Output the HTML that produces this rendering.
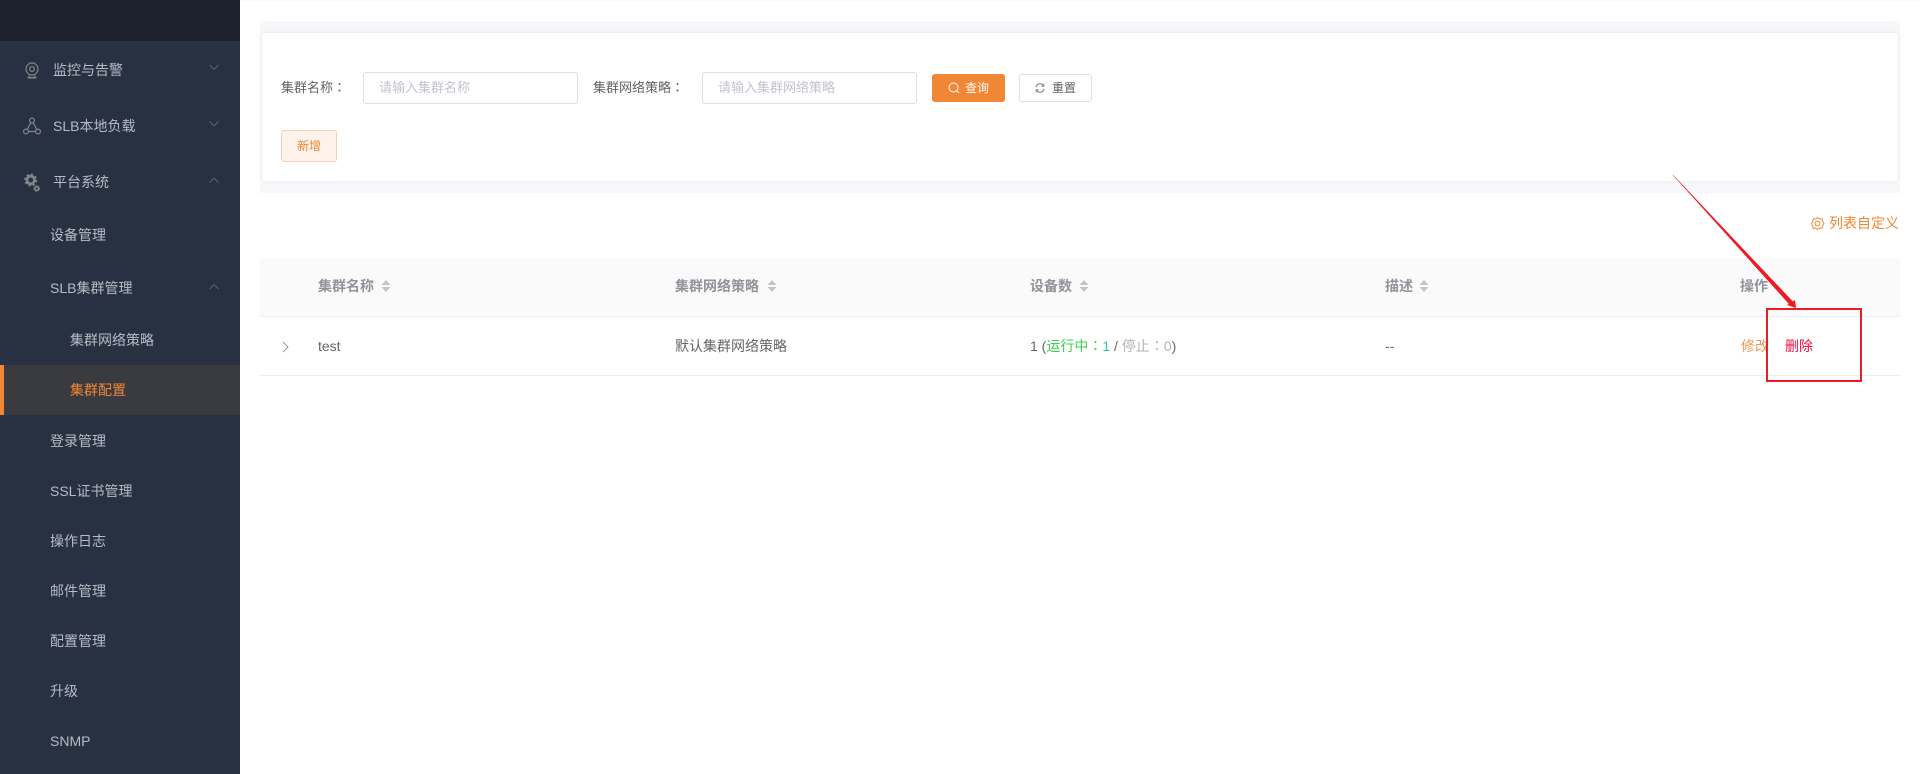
<!DOCTYPE html>
<html lang="zh-CN"><head><meta charset="utf-8"><title>集群配置</title>
<style>
*{box-sizing:border-box;margin:0;padding:0}
html,body{width:1920px;height:774px;overflow:hidden;background:#fff;font-family:"Liberation Sans","Noto Sans CJK SC",sans-serif}
.a{position:absolute;white-space:nowrap}
#side{left:0;top:0;width:240px;height:774px;background:#283142}
#top{left:0;top:0;width:240px;height:41px;background:#1c222e}
.m{color:#b6bcc4;font-size:14px;line-height:20px}
.t{font-size:14px;line-height:20px;color:#666}
.l{font-size:13px;line-height:20px;color:#606266}
.h{font-size:14px;line-height:20px;color:#909399;font-weight:700}
.box{background:#fff;border:1px solid #dcdfe6;border-radius:3px}
.ph{font-size:13px;line-height:20px;color:#c0c4cc}
.c{font-family:"Liberation Sans","Noto Sans CJK TC",sans-serif}
svg{position:absolute;overflow:visible}
</style></head><body>
<div class="a" style="left:240px;top:0;width:1680px;height:2px;background:linear-gradient(#f5f5f5,#fff)"></div>
<div class="a" id="side"></div><div class="a" id="top"></div>
<svg style="left:0;top:0" width="240" height="774" fill="none" stroke="#80858b" stroke-width="1.2">
<circle cx="32" cy="69" r="6"/><circle cx="32" cy="69" r="2.400"/><path d="M29 75.500v2h6v-2M27.500 78h9"/>
<circle cx="32" cy="120.500" r="2.400"/><circle cx="26" cy="131.500" r="2.400"/><circle cx="38" cy="131.500" r="2.400"/><path d="M30.800 122.600 27.200 129.400M33.200 122.600 36.800 129.400M28.400 131.500H35.600"/>
<circle cx="30.700" cy="180" r="3.800" stroke-width="2.800"/><circle cx="30.700" cy="180" r="5.600" stroke-width="1.800" stroke-dasharray="2.200 2.200"/>
<circle cx="36.700" cy="188.500" r="1.900" stroke-width="1.600"/><circle cx="36.700" cy="188.500" r="2.900" stroke-width="1" stroke-dasharray="1.200 1.200"/>
<g stroke="#5a6270" stroke-width="1"><path d="M209.500 65l4.500 4.300 4.500-4.300M209.500 121.500l4.500 4.300 4.500-4.300M209.500 182.500l4.500-4.300 4.500 4.300M209.500 289l4.500-4.300 4.500 4.300"/></g>
</svg>
<div class="a m" style="left:53px;top:60px">监控与告警</div>
<div class="a m" style="left:53px;top:116px">SLB本地负载</div>
<div class="a m" style="left:53px;top:172px">平台系统</div>
<div class="a m" style="left:50px;top:225px">设备管理</div>
<div class="a m" style="left:50px;top:278px">SLB集群管理</div>
<div class="a m" style="left:70px;top:330px">集群网络策略</div>
<div class="a" style="left:0;top:365px;width:240px;height:50px;background:#3a3b40;border-left:4px solid #f18634"></div>
<div class="a m" style="left:70px;top:380px;color:#f18634">集群配置</div>
<div class="a m" style="left:50px;top:431px">登录管理</div>
<div class="a m" style="left:50px;top:481px">SSL证书管理</div>
<div class="a m" style="left:50px;top:531px">操作日志</div>
<div class="a m" style="left:50px;top:581px">邮件管理</div>
<div class="a m" style="left:50px;top:631px">配置管理</div>
<div class="a m" style="left:50px;top:681px">升级</div>
<div class="a m" style="left:50px;top:731px">SNMP</div>

<div class="a" style="left:260px;top:21px;width:1640px;height:172px;background:#f7f8fa"></div>
<div class="a" style="left:261px;top:32px;width:1638px;height:150px;background:#fff;border:1px solid #eef0f6;border-radius:3px;box-shadow:0 0 5px rgba(230,232,238,.25)"></div>
<div class="a l" style="left:281px;top:78px">集群名称<span class="c" lang="zh-TW">：</span></div>
<div class="a box" style="left:363px;top:72px;width:215px;height:32px"></div>
<div class="a ph" style="left:379px;top:78px">请输入集群名称</div>
<div class="a l" style="left:593px;top:78px">集群网络策略<span class="c" lang="zh-TW">：</span></div>
<div class="a box" style="left:702px;top:72px;width:215px;height:32px"></div>
<div class="a ph" style="left:718px;top:78px">请输入集群网络策略</div>
<div class="a" style="left:932px;top:74px;width:73px;height:28px;background:#f18634;border-radius:3px"></div>
<svg style="left:948px;top:82px" width="12" height="12" fill="none" stroke="#fff" stroke-width="1"><circle cx="5.500" cy="5.500" r="4.500"/><path d="M9 9l2 2"/></svg>
<div class="a" style="left:965px;top:78px;font-size:12px;line-height:20px;color:#fff">查询</div>
<div class="a box" style="left:1019px;top:74px;width:73px;height:28px"></div>
<svg style="left:1035px;top:83px" width="10" height="10" fill="none" stroke="#778" stroke-width="1"><path d="M1 4A4 4 0 0 1 8.500 3M9 6A4 4 0 0 1 1.500 7"/><path d="M8.800 .8v2.500H6.300M1.200 9.200V6.700h2.500" stroke-width=".8"/></svg>
<div class="a" style="left:1052px;top:78px;font-size:12px;line-height:20px;color:#606266">重置</div>
<div class="a" style="left:281px;top:130px;width:56px;height:32px;background:#fef3ea;border:1px solid #fbcfae;border-radius:3px;text-align:center;font-size:12px;line-height:30px;color:#f18634">新增</div>

<svg style="left:1811px;top:217px" width="13" height="13" fill="none" stroke="#f18634"><circle cx="6.500" cy="6.500" r="2.400"/><path d="M6.500 .5l2 1.400 2.400-.1.700 2.300 1.400 2.400-1.400 2.400-.7 2.300-2.400-.1-2 1.400-2-1.400-2.400.1-.7-2.300L.5 6.500l1.400-2.400.7-2.300 2.400.1z"/></svg>
<div class="a t" style="left:1829px;top:213px;color:#f18634">列表自定义</div>

<div class="a" style="left:260px;top:258px;width:1640px;height:59px;background:#fafafa;border-bottom:1px solid #ebeef5"></div>
<div class="a" style="left:260px;top:375px;width:1640px;height:1px;background:#ebeef5"></div>
<div class="a h" style="left:318px;top:276px">集群名称</div>
<svg style="left:381px;top:280px" width="10" height="12" fill="#c0c4cc"><path d="M5 0l4.500 5H.5zM.5 7h9L5 12z"/></svg>
<div class="a h" style="left:675px;top:276px">集群网络策略</div>
<svg style="left:767px;top:280px" width="10" height="12" fill="#c0c4cc"><path d="M5 0l4.500 5H.5zM.5 7h9L5 12z"/></svg>
<div class="a h" style="left:1030px;top:276px">设备数</div>
<svg style="left:1079px;top:280px" width="10" height="12" fill="#c0c4cc"><path d="M5 0l4.500 5H.5zM.5 7h9L5 12z"/></svg>
<div class="a h" style="left:1385px;top:276px">描述</div>
<svg style="left:1419px;top:280px" width="10" height="12" fill="#c0c4cc"><path d="M5 0l4.500 5H.5zM.5 7h9L5 12z"/></svg>
<div class="a h" style="left:1740px;top:276px">操作</div>
<svg style="left:282px;top:341px" width="7" height="12" fill="none" stroke="#8a8f99" stroke-width=".9"><path d="M1 1l5 5-5 5"/></svg>
<div class="a t" style="left:318px;top:336px">test</div>
<div class="a t" style="left:675px;top:336px">默认集群网络策略</div>
<div class="a t" style="left:1030px;top:336px">1 (<span style="color:#3ecf4f">运行中<span class="c" lang="zh-TW">：</span></span><span style="color:#26c9a8">1</span> / <span style="color:#b3b3b3">停止<span class="c" lang="zh-TW">：</span></span><span style="color:#b3b3b3">0</span>)</div>
<div class="a t" style="left:1385px;top:336px">--</div>
<div class="a t" style="left:1741px;top:336px;color:#f19a55">修改</div>
<div class="a t" style="left:1785px;top:336px;color:#ff0f3c">删除</div>

<svg style="left:0;top:0" width="1920" height="774" fill="none">
<path d="M1673 175L1794.600 303.500 1791.400 306.500z" fill="#ed1c24" stroke="#ed1c24" stroke-width=".5"/>
<path d="M1796 308L1787 305 1795 300z" fill="#ed1c24"/>
<rect x="1767" y="309" width="94" height="72" stroke="#ed1c24" stroke-width="2"/>
</svg>
</body></html>
